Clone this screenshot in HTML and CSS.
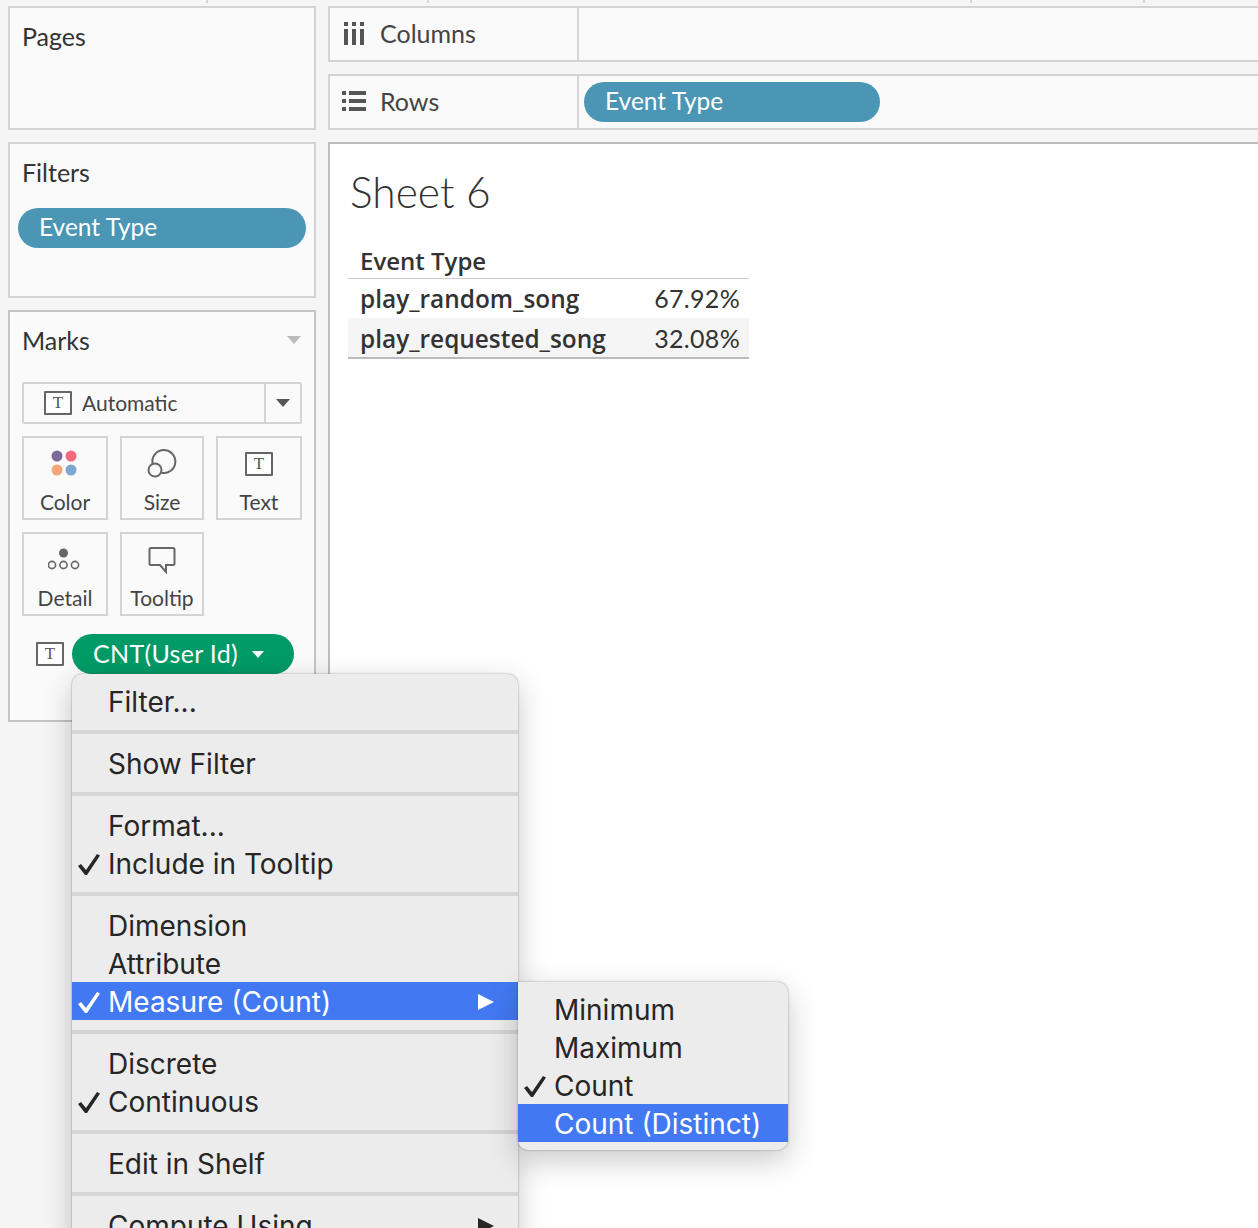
FILE: index.html
```html
<!DOCTYPE html>
<html lang="en">
<head>
    <meta charset="UTF-8">
    <meta name="viewport" content="width=device-width, initial-scale=1.0">
    <title>Sheet 6</title>
    <link rel="stylesheet" href="styles.css">
</head>
<body>
<div class="ruler">
    <span class="tick tick-a"></span>
    <span class="tick tick-b"></span>
    <span class="tick tick-c"></span>
    <span class="tick tick-d"></span>
</div>

<div class="workspace">
    <div class="side">
        <div class="panel pages-panel">
            <div class="panel-title">Pages</div>
        </div>

        <div class="panel filters-panel">
            <div class="panel-title">Filters</div>
            <div class="pill pill-blue filter-pill">Event Type</div>
        </div>

        <div class="panel marks-panel">
            <div class="marks-head">
                <div class="panel-title">Marks</div>
                <span class="arrow arrow-light"></span>
            </div>

            <div class="mark-select">
                <div class="mark-select-label">
                    <span class="t-icon">T</span>
                    <span class="mark-select-text">Automatic</span>
                </div>
                <div class="mark-select-drop"><span class="arrow arrow-dark"></span></div>
            </div>

            <div class="mark-grid">
                <div class="mark-btn">
                    <svg width="30" height="30" viewBox="0 0 30 30">
                        <circle cx="7" cy="8" r="5.5" fill="#7d6a9c"/>
                        <circle cx="21" cy="8" r="5.5" fill="#f4697f"/>
                        <circle cx="7" cy="22" r="5.5" fill="#f2a67b"/>
                        <circle cx="21" cy="22" r="5.5" fill="#7ea6d0"/>
                    </svg>
                    <span>Color</span>
                </div>
                <div class="mark-btn">
                    <svg width="30" height="30" viewBox="0 0 30 30" fill="none" stroke="#666" stroke-width="2">
                        <path d="M5.600 16A11.500 11.500 0 1 1 14.400 24.800"/>
                        <circle cx="8" cy="22" r="6.500"/>
                    </svg>
                    <span>Size</span>
                </div>
                <div class="mark-btn">
                    <span class="t-icon">T</span>
                    <span>Text</span>
                </div>
                <div class="mark-btn">
                    <svg width="34" height="30" viewBox="0 0 34 30" fill="none" stroke="#666" stroke-width="1.600">
                        <circle cx="15.500" cy="9" r="4.500" fill="#666" stroke="none"/>
                        <circle cx="4" cy="21" r="3.600"/>
                        <circle cx="15.500" cy="21" r="3.600"/>
                        <circle cx="27" cy="21" r="3.600"/>
                    </svg>
                    <span>Detail</span>
                </div>
                <div class="mark-btn">
                    <svg width="30" height="30" viewBox="0 0 30 30" fill="none" stroke="#666" stroke-width="2">
                        <path d="M4 4H26A1.500 1.500 0 0 1 27.500 5.500V19.500A1.500 1.500 0 0 1 26 21H19V28L13 21H4A1.500 1.500 0 0 1 2.500 19.500V5.500A1.500 1.500 0 0 1 4 4Z"/>
                    </svg>
                    <span>Tooltip</span>
                </div>
            </div>

            <div class="cnt-row">
                <span class="t-icon">T</span>
                <div class="pill pill-green">CNT(User Id)<span class="arrow arrow-white"></span></div>
            </div>
        </div>
    </div>

    <div class="main">
        <div class="shelf">
            <div class="shelf-label">
                <svg width="20" height="24" viewBox="0 0 20 24" fill="#555">
                    <rect x="0" y="0" width="4" height="4"/>
                    <rect x="8" y="0" width="4" height="4"/>
                    <rect x="16" y="0" width="4" height="4"/>
                    <rect x="0" y="7" width="4" height="16"/>
                    <rect x="8" y="7" width="4" height="16"/>
                    <rect x="16" y="7" width="4" height="16"/>
                </svg>
                <span class="shelf-text">Columns</span>
            </div>
            <div class="shelf-body"></div>
        </div>

        <div class="shelf">
            <div class="shelf-label rows-label">
                <svg width="24" height="20" viewBox="0 0 24 20" fill="#555">
                    <rect x="0" y="0" width="4" height="4"/>
                    <rect x="7" y="0" width="17" height="4"/>
                    <rect x="0" y="8" width="4" height="4"/>
                    <rect x="7" y="8" width="17" height="4"/>
                    <rect x="0" y="16" width="4" height="4"/>
                    <rect x="7" y="16" width="17" height="4"/>
                </svg>
                <span class="shelf-text">Rows</span>
            </div>
            <div class="shelf-body">
                <div class="pill pill-blue rows-pill">Event Type</div>
            </div>
        </div>

        <div class="view">
            <h1 class="sheet-title">Sheet 6</h1>
            <div class="crosstab">
                <div class="ct-head">Event Type</div>
                <div class="ct-row">
                    <span class="ct-name">play_random_song</span>
                    <span class="ct-val">67.92%</span>
                </div>
                <div class="ct-row ct-row-alt">
                    <span class="ct-name">play_requested_song</span>
                    <span class="ct-val">32.08%</span>
                </div>
            </div>
        </div>
    </div>
</div>

<div class="menu">
    <div class="menu-item">Filter...</div>
    <div class="menu-sep"></div>
    <div class="menu-item">Show Filter</div>
    <div class="menu-sep"></div>
    <div class="menu-item">Format...</div>
    <div class="menu-item">
        <svg class="check" width="24" height="22" viewBox="0 0 24 22"><path d="M1 12L4 10L9 16L20 0L23 1.500L10 21H8Z"/></svg>
        Include in Tooltip
    </div>
    <div class="menu-sep"></div>
    <div class="menu-item">Dimension</div>
    <div class="menu-item">Attribute</div>
    <div class="menu-item active has-sub">
        <svg class="check" width="24" height="22" viewBox="0 0 24 22"><path d="M1 12L4 10L9 16L20 0L23 1.500L10 21H8Z"/></svg>
        Measure (Count)
    </div>
    <div class="menu-sep"></div>
    <div class="menu-item">Discrete</div>
    <div class="menu-item">
        <svg class="check" width="24" height="22" viewBox="0 0 24 22"><path d="M1 12L4 10L9 16L20 0L23 1.500L10 21H8Z"/></svg>
        Continuous
    </div>
    <div class="menu-sep"></div>
    <div class="menu-item">Edit in Shelf</div>
    <div class="menu-sep"></div>
    <div class="menu-item has-sub">Compute Using</div>

    <div class="submenu">
        <div class="menu-item">Minimum</div>
        <div class="menu-item">Maximum</div>
        <div class="menu-item">
            <svg class="check" width="24" height="22" viewBox="0 0 24 22"><path d="M1 12L4 10L9 16L20 0L23 1.500L10 21H8Z"/></svg>
            Count
        </div>
        <div class="menu-item active">Count (Distinct)</div>
    </div>
</div>
</body>
</html>
```

FILE: styles.css
```css
html, body {
    height: 100%;
}
body {
    font-family: "Lato", Arial, sans-serif;
    margin: 0;
    background: #f5f5f5;
    color: #333;
    overflow: hidden;
    position: relative;
}

/* ticks along the very top edge */
.ruler {
    display: flex;
    height: 3px;
}
.tick {
    width: 2px;
    background: #d4d4d4;
}
.tick-a { margin-left: 206px; }
.tick-b { margin-left: 219px; }
.tick-c { margin-left: 541px; }
.tick-d { margin-left: 171px; }

.workspace {
    display: flex;
    gap: 12px;
    padding: 3px 0 0 8px;
}
.side {
    width: 308px;
    flex: none;
    display: flex;
    flex-direction: column;
    gap: 12px;
}
.main {
    width: 1000px;
    flex: none;
    display: flex;
    flex-direction: column;
    gap: 12px;
}

/* left cards */
.panel {
    background: #fafafa;
    border: 2px solid #d4d4d4;
    box-sizing: border-box;
    padding: 0 12px;
}
.panel-title {
    font-size: 25px;
    line-height: 30px;
    padding-top: 13px;
}
.pages-panel { height: 124px; }
.filters-panel { height: 156px; }
.marks-panel {
    height: 412px;
    border-color: #c4c4c4;
}
.marks-head {
    display: flex;
    justify-content: space-between;
}
.marks-head .arrow {
    margin: 24px 1px 0 0;
}

.pill {
    height: 40px;
    border-radius: 20px;
    color: #fff;
    font-size: 25px;
    line-height: 38px;
    box-sizing: border-box;
}
.pill-blue {
    background: #4a96b4;
    font-size: 24.500px;
}
.pill-green {
    background: #009a66;
    width: 222px;
    padding: 0 0 3px 21px;
    display: flex;
    align-items: center;
    letter-spacing: 0.300px;
}
.filter-pill {
    width: 288px;
    margin: 21px 0 0 -4px;
    padding-left: 21px;
}
.rows-pill {
    width: 296px;
    margin-left: 5px;
    padding-left: 21px;
}

.arrow {
    display: block;
    width: 0;
    height: 0;
    border-left: 7px solid transparent;
    border-right: 7px solid transparent;
}
.arrow-light { border-top: 8px solid #bbb; }
.arrow-dark { border-top: 8px solid #555; }
.arrow-white {
    border-top: 7px solid #fff;
    border-left-width: 6px;
    border-right-width: 6px;
    margin: 3px 0 0 14px;
}

.t-icon {
    display: block;
    width: 28px;
    height: 24px;
    box-sizing: border-box;
    border: 2px solid #666;
    border-radius: 1px;
    background: #fff;
    color: #555;
    font-family: "Liberation Serif", serif;
    font-size: 17px;
    line-height: 20px;
    text-align: center;
}

.mark-select {
    display: flex;
    height: 42px;
    margin-top: 27px;
    border: 2px solid #d4d4d4;
    border-radius: 2px;
    box-sizing: border-box;
}
.mark-select-label {
    flex: 1;
    display: flex;
    align-items: center;
    gap: 10px;
    padding-left: 20px;
    font-size: 21px;
    color: #444;
}
.mark-select-text {
    margin-top: -2px;
}
.mark-select-drop {
    width: 34px;
    border-left: 2px solid #d4d4d4;
    display: flex;
    align-items: center;
    justify-content: center;
}

.mark-grid {
    display: grid;
    grid-template-columns: 86px 84px 86px;
    grid-auto-rows: 84px;
    gap: 12px;
    margin-top: 12px;
}
.mark-btn {
    border: 2px solid #d4d4d4;
    box-sizing: border-box;
    display: flex;
    flex-direction: column;
    align-items: center;
    padding-top: 10px;
    font-size: 21px;
    color: #444;
}
.mark-btn svg {
    height: 30px;
    margin-bottom: 11px;
}
.mark-btn .t-icon {
    margin: 4px 0 13px;
}
.mark-btn span:last-child {
    line-height: 26px;
}

.cnt-row {
    display: flex;
    align-items: center;
    gap: 8px;
    margin-top: 18px;
    padding-left: 14px;
}

/* shelves */
.shelf {
    display: flex;
    height: 56px;
    background: #fafafa;
    border: 2px solid #d4d4d4;
    box-sizing: border-box;
}
.shelf-label {
    width: 249px;
    flex: none;
    display: flex;
    align-items: center;
    gap: 16px;
    padding-left: 14px;
    box-sizing: border-box;
    border-right: 2px solid #d4d4d4;
    font-size: 25px;
    color: #444;
}
.shelf-text {
    margin-top: -2px;
}
.rows-label {
    gap: 14px;
    padding-left: 12px;
}
.rows-label svg {
    margin-top: -2px;
}
.shelf-body {
    flex: 1;
    display: flex;
    align-items: center;
}

/* worksheet */
.view {
    background: #fff;
    border-top: 2px solid #bdbdbd;
    border-left: 2px solid #bdbdbd;
    height: 1100px;
    box-sizing: border-box;
    padding: 0 0 0 18px;
}
.sheet-title {
    font-size: 42.500px;
    font-weight: 300;
    line-height: 50px;
    margin: 23px 0 0 2px;
    color: #333;
}
.crosstab {
    width: 401px;
    margin-top: 25px;
}
.ct-head {
    height: 36px;
    line-height: 38px;
    padding-left: 12px;
    border-bottom: 1px solid #ccc;
    font-family: "Open Sans", Arial, sans-serif;
    font-size: 24px;
    font-weight: 600;
}
.ct-row {
    display: flex;
    justify-content: space-between;
    height: 40px;
    line-height: 39px;
    padding: 0 9px 0 12px;
    box-sizing: border-box;
}
.ct-row-alt {
    height: 41px;
    margin-top: -1px;
    line-height: 41px;
    background: #f5f5f5;
    border-bottom: 2px solid #bbb;
}
.ct-name {
    font-family: "Open Sans", Arial, sans-serif;
    font-size: 24.400px;
    font-weight: 600;
}
.ct-val {
    font-size: 25px;
    letter-spacing: 0.300px;
}

/* context menu, lies over the marks card */
.menu {
    position: absolute;
    left: 72px;
    top: 674px;
    width: 446px;
    height: 620px;
    box-sizing: border-box;
    padding-top: 8px;
    background: #ececec;
    border-radius: 10px 10px 0 0;
    box-shadow: 0 0 2px rgba(0, 0, 0, 0.4), 0 10px 30px rgba(0, 0, 0, 0.22);
    font-family: "Inter", Arial, sans-serif;
    font-size: 28px;
    color: #262626;
}
.menu-item {
    position: relative;
    height: 38px;
    line-height: 40px;
    padding-left: 36px;
}
.menu-sep {
    height: 4px;
    margin: 10px 0;
    background: #d5d5d5;
}
.menu-item.active {
    background: #4279f2;
    color: #fff;
}
.check {
    position: absolute;
    left: 5px;
    top: 10px;
    fill: currentColor;
}
.menu-item.has-sub::after {
    content: "";
    position: absolute;
    right: 24px;
    top: 12px;
    border-left: 16px solid currentColor;
    border-top: 8px solid transparent;
    border-bottom: 8px solid transparent;
}
.submenu {
    position: absolute;
    left: 446px;
    top: 308px;
    width: 270px;
    height: 168px;
    box-sizing: border-box;
    padding-top: 8px;
    background: #ececec;
    border-radius: 0 10px 10px 10px;
    box-shadow: 0 0 2px rgba(0, 0, 0, 0.4), 0 10px 30px rgba(0, 0, 0, 0.22);
}
```
